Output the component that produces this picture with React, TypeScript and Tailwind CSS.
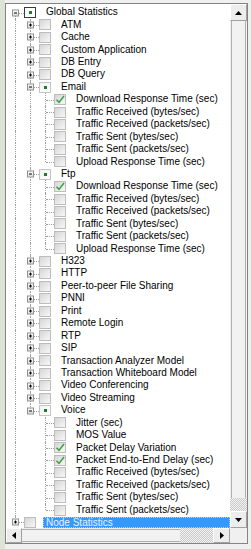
import React from "react";

type State = "none" | "checked" | "partial";

interface TreeNode {
  label: string;
  state?: State;
  open?: boolean;
  children?: TreeNode[];
  expandable?: boolean;
  selected?: boolean;
  hot?: boolean;
}

const leaf = (label: string, state: State = "none"): TreeNode => ({ label, state });
const closed = (label: string): TreeNode => ({ label, expandable: true });

const tree: TreeNode[] = [
  {
    label: "Global Statistics",
    state: "partial",
    open: true,
    hot: true,
    children: [
      closed("ATM"),
      closed("Cache"),
      closed("Custom Application"),
      closed("DB Entry"),
      closed("DB Query"),
      {
        label: "Email",
        state: "partial",
        open: true,
        children: [
          leaf("Download Response Time (sec)", "checked"),
          leaf("Traffic Received (bytes/sec)"),
          leaf("Traffic Received (packets/sec)"),
          leaf("Traffic Sent (bytes/sec)"),
          leaf("Traffic Sent (packets/sec)"),
          leaf("Upload Response Time (sec)"),
        ],
      },
      {
        label: "Ftp",
        state: "partial",
        open: true,
        children: [
          leaf("Download Response Time (sec)", "checked"),
          leaf("Traffic Received (bytes/sec)"),
          leaf("Traffic Received (packets/sec)"),
          leaf("Traffic Sent (bytes/sec)"),
          leaf("Traffic Sent (packets/sec)"),
          leaf("Upload Response Time (sec)"),
        ],
      },
      closed("H323"),
      closed("HTTP"),
      closed("Peer-to-peer File Sharing"),
      closed("PNNI"),
      closed("Print"),
      closed("Remote Login"),
      closed("RTP"),
      closed("SIP"),
      closed("Transaction Analyzer Model"),
      closed("Transaction Whiteboard Model"),
      closed("Video Conferencing"),
      closed("Video Streaming"),
      {
        label: "Voice",
        state: "partial",
        open: true,
        children: [
          leaf("Jitter (sec)"),
          leaf("MOS Value"),
          leaf("Packet Delay Variation", "checked"),
          leaf("Packet End-to-End Delay (sec)", "checked"),
          leaf("Traffic Received (bytes/sec)"),
          leaf("Traffic Received (packets/sec)"),
          leaf("Traffic Sent (bytes/sec)"),
          leaf("Traffic Sent (packets/sec)"),
        ],
      },
    ],
  },
  { label: "Node Statistics", expandable: true, selected: true },
];

interface Row {
  node: TreeNode;
  guides: boolean[];
  first: boolean;
  last: boolean;
  root: boolean;
}

function flatten(nodes: TreeNode[], guides: boolean[], root: boolean): Row[] {
  const rows: Row[] = [];
  nodes.forEach((node, i) => {
    const last = i === nodes.length - 1;
    rows.push({ node, guides, first: i === 0, last, root });
    if (node.open && node.children) {
      rows.push(...flatten(node.children, [...guides, !last], false));
    }
  });
  return rows;
}

const Expander = ({ open }: { open: boolean }) => (
  <div className="absolute left-[4px] top-1/2 -translate-y-1/2 w-[7px] h-[7px] border border-[#8f8f8f] bg-gradient-to-b from-white to-[#dcdcdc] flex items-center justify-center">
    <div className="relative w-[3px] h-[1px] bg-black">
      {!open && <div className="absolute left-[1px] -top-[1px] w-[1px] h-[3px] bg-black" />}
    </div>
  </div>
);

const CheckBox = ({ state, hot }: { state: State; hot?: boolean }) => {
  if (state === "partial") {
    return (
      <div
        className={`ml-[1px] w-[12px] h-[11px] flex items-center justify-center ${
          hot ? "border border-[#3a3a3a] bg-white" : "border border-[#c4c4c4] bg-gradient-to-br from-[#f2f2f2] to-white"
        }`}
      >
        <div className="w-[3px] h-[3px] bg-[#1d7a2a]" />
      </div>
    );
  }
  return (
    <div className="relative ml-[1px] w-[12px] h-[11px] border border-[#bdbdbd] bg-gradient-to-br from-[#d6d6d6] to-[#f7f7f7]">
      {state === "checked" && (
        <svg viewBox="0 0 12 11" className="absolute -left-[1px] -top-[1px] w-[12px] h-[11px]">
          <path d="M2.5 5.8 L5 8.4 L10 2" fill="none" stroke="#42a045" strokeWidth="1.6" />
        </svg>
      )}
    </div>
  );
};

const TreeRow = ({ row }: { row: Row }) => {
  const { node, guides, first, last, root } = row;
  const hasKids = node.expandable || !!node.children;
  return (
    <div className="flex items-center h-[12.45px]">
      {guides.map((g, i) => (
        <div key={i} className="relative w-[15px] self-stretch shrink-0">
          {g && <div className="absolute left-[7px] top-0 bottom-0 border-l border-dotted border-[#a0a0a0]" />}
        </div>
      ))}
      <div className="relative w-[15px] self-stretch shrink-0">
        <div
          className={`absolute left-[7px] border-l border-dotted border-[#a0a0a0] ${
            root && first ? "top-1/2" : "top-0"
          } ${last ? "bottom-1/2" : "bottom-0"}`}
        />
        <div className="absolute left-[8px] -right-[1px] top-1/2 border-t border-dotted border-[#a0a0a0]" />
        {hasKids && <Expander open={!!node.open} />}
      </div>
      <CheckBox state={node.state ?? "none"} hot={node.hot} />
      <div
        className={`ml-[7px] px-[3px] whitespace-nowrap ${
          node.selected
            ? "flex-1 h-[11px] leading-[11px] bg-[#3399ff] text-[#e8f4ff] outline outline-1 outline-dotted outline-[#a9d3ff] -outline-offset-1"
            : "text-black"
        }`}
      >
        {node.label}
      </div>
    </div>
  );
};

const Arrow = ({ dir }: { dir: "up" | "down" | "left" | "right" }) => {
  const pts = {
    up: "0,4 3.5,0 7,4",
    down: "0,0 7,0 3.5,4",
    left: "4,0 4,7 0,3.5",
    right: "0,0 0,7 4,3.5",
  }[dir];
  const vert = dir === "up" || dir === "down";
  return (
    <svg viewBox={vert ? "0 0 7 4" : "0 0 4 7"} className={vert ? "w-[7px] h-[4px]" : "w-[4px] h-[7px]"}>
      <polygon points={pts} fill="#000" />
    </svg>
  );
};

const btn =
  "flex items-center justify-center bg-[#ededed] border border-t-white border-l-white border-r-[#a0a0a0] border-b-[#a0a0a0] shrink-0";
const track = "bg-[repeating-conic-gradient(#c9c9c9_0_25%,#f3f3f3_0_50%)] bg-[length:2px_2px]";

export default function App() {
  const rows = flatten(tree, [], true);
  return (
    <div className="w-[251px] h-[549px] bg-[#f0f0f0] flex font-['Liberation_Sans',Arial,sans-serif] text-[10px] leading-[12.45px] overflow-hidden">
      <div className="w-[5px] h-full bg-[#dce5d3] shrink-0" />
      <div className="w-[243px] h-[541px] mt-[3px] border border-[#848484] bg-white grid grid-cols-[1fr_17px] grid-rows-[1fr_15px]">
        <div className="overflow-hidden pt-[2.3px] pl-[2px]">
          {rows.map((r, i) => (
            <TreeRow key={i} row={r} />
          ))}
        </div>
        <div className="flex flex-col bg-[#f0f0f0]">
          <div className={`${btn} h-[17px]`}>
            <Arrow dir="up" />
          </div>
          <div className="h-[477px] bg-[#f2f2f2] border-x border-x-[#b0b0b0] mx-[1px] shrink-0" />
          <div className={`flex-1 ${track}`} />
          <div className={`${btn} h-[17px]`}>
            <Arrow dir="down" />
          </div>
        </div>
        <div className="flex bg-[#f0f0f0]">
          <div className={`${btn} w-[16px]`}>
            <Arrow dir="left" />
          </div>
          <div className="w-[158px] bg-[#f2f2f2] border-y border-y-[#b0b0b0] my-[1px] shrink-0" />
          <div className={`flex-1 ${track}`} />
          <div className={`${btn} w-[17px]`}>
            <Arrow dir="right" />
          </div>
        </div>
        <div className="bg-[#f0f0f0]" />
      </div>
    </div>
  );
}
